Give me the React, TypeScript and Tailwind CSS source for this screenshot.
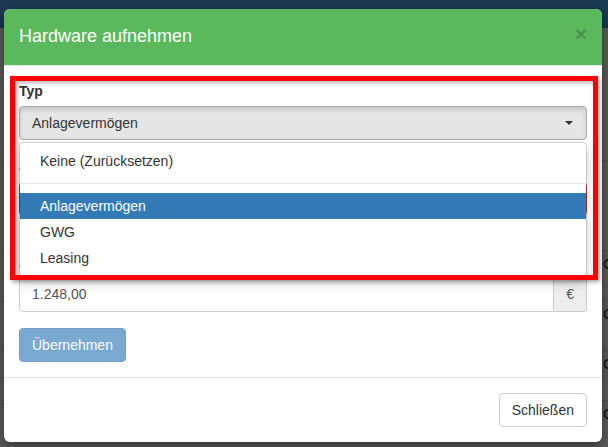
export default function App() {
  const rows = [0, 1, 2, 3];

  return (
    <div className="relative w-[608px] h-[447px] overflow-hidden bg-white font-['Liberation_Sans',Arial,sans-serif] text-[14px] text-[#333]">
      {/* page behind the modal */}
      <div className="h-[28px] bg-[#4c9dde]" />
      <div className="h-[132px]" />
      <div className="h-[90px] border-t border-[#ddd]" />
      {rows.map((r) => (
        <div key={r} className="h-[50px] border-t border-[#ddd] pl-[603px] pt-[3px] leading-[20px] text-[#1a2f55] text-[15px]">
          C
        </div>
      ))}

      {/* backdrop */}
      <div className="absolute inset-0 bg-black/[0.63]" />

      {/* modal */}
      <div className="absolute left-[4px] top-[9px] w-[598px] rounded-[6px] bg-white shadow-[0_5px_15px_rgba(0,0,0,0.5)]">
        <div className="flex items-start justify-between rounded-t-[6px] bg-[#5cb85c] px-[15px] pt-[15px] pb-[15px] border-b border-[#e5e5e5]">
          <h4 className="text-[18px] leading-[25.7px] text-white">Hardware aufnehmen</h4>
          <button className="mt-[-1px] text-[21px] font-bold leading-[21px] text-black opacity-20">×</button>
        </div>

        <div className="relative px-[15px] pt-[15px] pb-[15px]">
          <div className="mb-[15px]">
            <label className="mb-[5px] block font-bold leading-[20px]">Typ</label>
            <div className="relative">
              <button className="flex h-[34px] w-full items-center justify-between rounded-[4px] border border-[#adadad] bg-[#e6e6e6] px-[12px] leading-[20px] text-[#333] shadow-[inset_0_3px_5px_rgba(0,0,0,0.125)]">
                <span>Anlagevermögen</span>
                <span className="h-0 w-0 border-x-[4px] border-t-[4px] border-x-transparent border-t-[#333] mr-[1px]" />
              </button>
              <ul className="absolute left-0 top-[calc(100%+2px)] z-10 w-full rounded-[4px] border border-black/15 bg-white bg-clip-padding py-[5px] shadow-[0_6px_12px_rgba(0,0,0,0.175)]">
                <li className="px-[20px] py-[3px] leading-[20px] text-[#333]">Keine (Zurücksetzen)</li>
                <li className="my-[9px] h-px bg-[#e5e5e5]" />
                <li className="bg-[#337ab7] px-[20px] py-[3px] leading-[20px] text-white">Anlagevermögen</li>
                <li className="px-[20px] py-[3px] leading-[20px] text-[#333]">GWG</li>
                <li className="px-[20px] py-[3px] leading-[20px] text-[#333]">Leasing</li>
              </ul>
            </div>
          </div>

          <div className="mb-[36px]">
            <label className="mb-[7px] block font-bold leading-[20px]">Anschaffungsdatum</label>
            <input className="block h-[34px] w-full rounded-[4px] border border-[#a94442] px-[12px]" />
          </div>

          <div>
            <label className="mb-[6px] block font-bold leading-[20px]">Anschaffungswert</label>
            <div className="flex h-[34px]">
              <input
                defaultValue="1.248,00"
                className="min-w-0 flex-1 rounded-l-[4px] border border-[#ccc] px-[12px] text-[#555] shadow-[inset_0_1px_1px_rgba(0,0,0,0.075)] outline-none"
              />
              <span className="flex items-center rounded-r-[4px] border border-l-0 border-[#ccc] bg-[#eee] px-[12px] text-[#555]">€</span>
            </div>
          </div>

          <button className="mt-[16px] h-[34px] rounded-[4px] border border-[#2e6da4] bg-[#337ab7] px-[12px] leading-[20px] text-white opacity-65">
            Übernehmen
          </button>

          {/* red annotation frame */}
          <div className="pointer-events-none absolute left-[6px] top-[10px] z-20 h-[204px] w-[588px] border-[5px] border-[#ff0000] shadow-[2px_2px_4px_rgba(0,0,0,0.35),inset_2px_2px_4px_rgba(0,0,0,0.3)]" />
        </div>

        <div className="flex justify-end border-t border-[#e5e5e5] p-[15px]">
          <button className="h-[34px] rounded-[4px] border border-[#ccc] bg-white px-[12px] leading-[20px] text-[#333]">
            Schließen
          </button>
        </div>
      </div>
    </div>
  );
}
